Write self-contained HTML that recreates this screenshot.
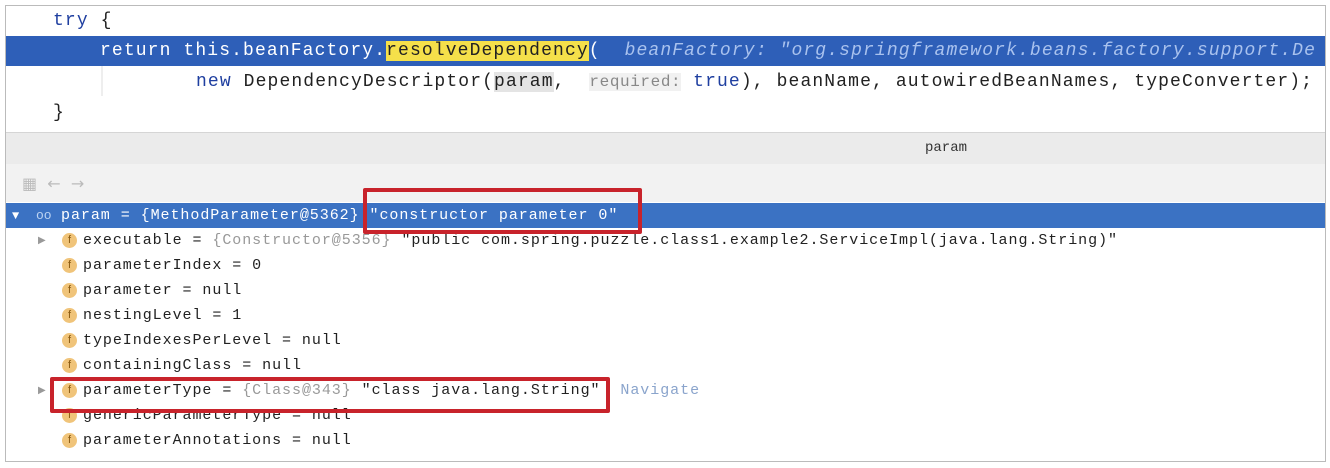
<!DOCTYPE html><html><head><style>
body{margin:0;width:1330px;height:468px;background:#fff;overflow:hidden;position:relative;font-family:"Liberation Mono",monospace}
.frame{position:absolute;left:5px;top:5px;width:1319px;height:455px;border:1px solid #bbb;overflow:hidden}
.l{position:absolute;white-space:pre;font-size:18px;letter-spacing:1.12px;color:#222;line-height:30px}
.kw{color:#1f3fa0}
.t{position:absolute;white-space:pre;font-size:15px;letter-spacing:0.95px;color:#222;line-height:25px}
.ic{position:absolute;width:15px;height:15px;border-radius:50%;background:#f0c47a;color:#8a5a10;font-size:11px;line-height:15px;text-align:center;font-family:"Liberation Sans",sans-serif}
.ar{position:absolute;font-size:10px;color:#999;font-family:"DejaVu Sans"}
.g{color:#999}
.rb{position:absolute;border:4px solid #c8232b;border-radius:2px}
</style></head><body>
<div class="frame">
<div class="l" style="left:47px;top:0"><span class="kw">try</span> {</div>
<div style="position:absolute;left:0;top:30px;width:1319px;height:30px;background:#2e5fb8"></div>
<div class="l" style="left:94px;top:30px;color:#fff">return this.beanFactory.<span style="background:#f5e04a;color:#222">resolveDependency</span>(  <i style="color:#a9c2ee">beanFactory: "org.springframework.beans.factory.support.De</i></div>
<div style="position:absolute;left:95px;top:60px;width:2px;height:30px;background:#eee"></div>
<div class="l" style="left:190px;top:61px"><span class="kw">new</span> DependencyDescriptor(<span style="background:#e4e4e4">param</span>,  <span style="background:#f1f1f1;color:#888;font-size:16px;letter-spacing:0.6px">required:</span> <span class="kw">true</span>), beanName, autowiredBeanNames, typeConverter);</div>
<div class="l" style="left:47px;top:92px">}</div>
<div style="position:absolute;left:0;top:126px;width:1319px;height:32px;background:#ebebeb;border-top:1px solid #d5d5d5"></div>
<div style="position:absolute;left:0;top:134px;width:1880px;text-align:center;font-size:14px;color:#333">param</div>
<div style="position:absolute;left:0;top:158px;width:1319px;height:38px;background:#f2f2f2"></div>
<div style="position:absolute;left:16px;top:168px;font-size:16px;color:#bbb;font-family:'DejaVu Sans'">▦ &nbsp;← &nbsp;→</div>
<div style="position:absolute;left:0;top:197px;width:1319px;height:25px;background:#3b72c3"></div>
<div class="t" style="left:6px;top:197px;color:#fff"><span style="font-size:12px">▼</span></div>
<div class="t" style="left:30px;top:197px;color:#bcd3f2;font-size:13px;letter-spacing:0">oo</div>
<div class="t" style="left:55px;top:197px;color:#fff">param = {MethodParameter@5362} "constructor parameter 0"</div>

<div class="ar" style="left:32px;top:229px">▶</div><div class="ic" style="left:56px;top:227px">f</div>
<div class="t" style="left:77px;top:222px">executable = <span class="g">{Constructor@5356}</span> "public com.spring.puzzle.class1.example2.ServiceImpl(java.lang.String)"</div>
<div class="ic" style="left:56px;top:252px">f</div><div class="t" style="left:77px;top:247px">parameterIndex = 0</div>
<div class="ic" style="left:56px;top:277px">f</div><div class="t" style="left:77px;top:272px">parameter = null</div>
<div class="ic" style="left:56px;top:302px">f</div><div class="t" style="left:77px;top:297px">nestingLevel = 1</div>
<div class="ic" style="left:56px;top:327px">f</div><div class="t" style="left:77px;top:322px">typeIndexesPerLevel = null</div>
<div class="ic" style="left:56px;top:352px">f</div><div class="t" style="left:77px;top:347px">containingClass = null</div>
<div class="ar" style="left:32px;top:379px">▶</div><div class="ic" style="left:56px;top:377px">f</div>
<div class="t" style="left:77px;top:372px">parameterType = <span class="g">{Class@343}</span> "class java.lang.String"  <span style="color:#8aa4cc">Navigate</span></div>
<div class="ic" style="left:56px;top:402px">f</div><div class="t" style="left:77px;top:397px">genericParameterType = null</div>
<div class="ic" style="left:56px;top:427px">f</div><div class="t" style="left:77px;top:422px">parameterAnnotations = null</div>
</div>
<div class="rb" style="left:363px;top:188px;width:271px;height:38px"></div>
<div class="rb" style="left:50px;top:377px;width:552px;height:28px"></div>
</body></html>
